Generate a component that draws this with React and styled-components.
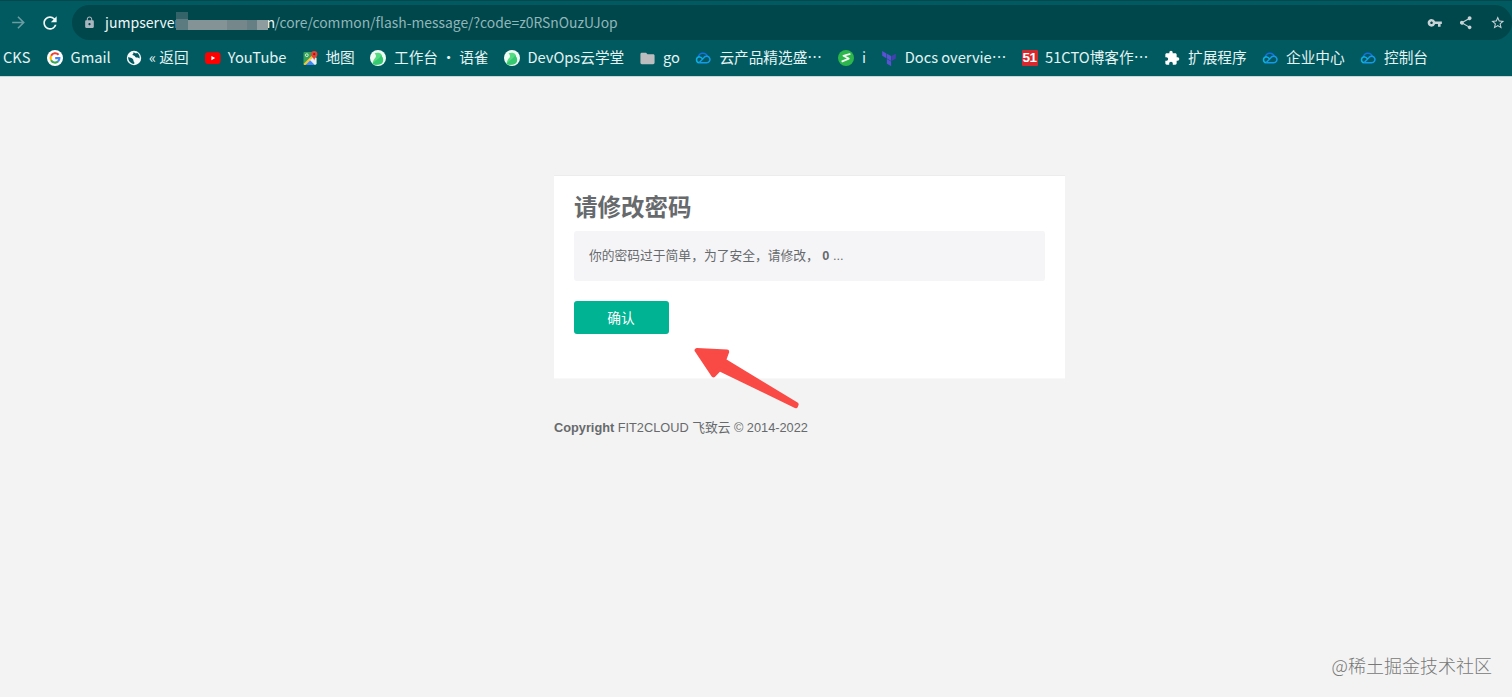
import styled, { createGlobalStyle } from 'styled-components';
import { MdArrowForward, MdRefresh, MdLock, MdVpnKey, MdShare, MdStarBorder, MdExtension, MdFolder } from 'react-icons/md';

const GlobalStyle = createGlobalStyle`
* {
  box-sizing: border-box;
}
body {
  margin: 0;
  background: #f3f3f3;
  overflow: hidden;
}
`;

const Page = styled.div`
position: relative;
height: 697px;
background: #f3f3f3;
`;

const Browser = styled.header`
height: 77px;
background: #005a60;
border-top: 1px solid #00474e;
border-bottom: 1px solid #c4d8d9;
color: #e4f3f3;
font-family: "Noto Sans CJK SC", sans-serif;
font-size: 14.67px;
white-space: nowrap;
overflow: hidden;
`;

const Toolbar = styled.div`
display: flex;
align-items: center;
height: 43px;
padding-left: 9px;
`;

const NavIcon = styled.span`
display: flex;
width: ${(props) => props.$width}px;
font-size: 18px;
color: ${(props) => props.$color || '#f1fafa'};
`;

const AddressBar = styled.div`
display: flex;
align-items: center;
flex: 1;
height: 35px;
padding: 0 7px 0 11px;
border-radius: 18px;
background: #00474c;
`;

const Url = styled.div`
display: flex;
flex: 1;
height: 22px;
line-height: 20px;
font-size: 13.87px;
color: #91b6b9;
`;

const Host = styled.span`
width: ${(props) => props.$width}px;
font-size: 14.1px;
color: #edf7f7;
`;

const Mosaic = styled.svg`
width: 92px;
height: 18px;
margin: 0 -1px 0 0;
position: relative;
z-index: 1;
`;

const Actions = styled.div`
display: flex;
align-items: center;
gap: 16px;
font-size: 15.5px;
color: #c9d3d7;
`;

const Bookmarks = styled.nav`
display: flex;
height: 28px;
padding-left: 3px;
`;

const Bookmark = styled.div`
display: flex;
flex: none;
align-items: center;
gap: ${(props) => props.$gap || 8}px;
width: ${(props) => props.$width}px;
line-height: 22px;
svg {
  flex: none;
}
`;

const Label = styled.span`
display: flex;
padding-bottom: 2px;
`;

const Main = styled.main`
width: 511px;
margin: 98px 0 0 554px;
font-family: "Liberation Sans", "Noto Sans CJK SC", sans-serif;
font-size: 12.75px;
color: #676a6c;
`;

const Card = styled.section`
height: 204px;
padding: 17px 20px;
background: #fff;
border-top: 1px solid #ececec;
border-bottom: 1px solid #f8f8f8;
`;

const Title = styled.h2`
margin: 0;
height: 38px;
font-size: 23.5px;
line-height: 31px;
font-weight: 700;
`;

const Message = styled.div`
height: 50px;
padding: 0 15px;
border-radius: 3px;
background: #f5f5f8;
font-size: 12.78px;
line-height: 49px;
`;

const ConfirmButton = styled.button`
display: block;
width: 95px;
height: 33px;
margin-top: 20px;
padding: 0 1px 2px 0;
border: 0;
border-radius: 3px;
background: #00b393;
color: #fff;
font-family: inherit;
font-size: 13.7px;
`;

const Copyright = styled.footer`
margin-top: 39px;
line-height: 20px;
`;

const Arrow = styled.svg`
position: absolute;
left: 690px;
top: 343px;
`;

const Watermark = styled.div`
position: absolute;
right: 20px;
bottom: 19px;
font-family: "Noto Sans CJK SC", sans-serif;
font-size: 18px;
font-weight: 300;
line-height: 26px;
color: #777;
`;

function Globe() {
  return (
    <svg width="16" height="16" viewBox="0 0 16 16">
      <circle cx="8" cy="8" r="7.2" fill="#f6fbfb" />
      <path d="M7.2 2.2c.9 1.3-.6 1.7-.8 2.7.9.7 2.4.3 2.7 1.6.3 1.1 1.5 1.2 2.6 1 .8-.1 1.1.9 1.9 1.1.4-2.4-.7-4.7-2.6-5.8-.5.7-1.2.9-1.8.3z" fill="#005a60" />
      <path d="M2.2 7.1c1.7.6 3.7.7 4.8 2.1.8 1 .1 1.8.9 2.5.5.5.7 1.1.2 2.2-3.5 0-6.2-3.1-5.9-6.8z" fill="#005a60" />
    </svg>
  );
}

function Google() {
  return (
    <svg width="16" height="16" viewBox="0 0 16 16">
      <circle cx="8" cy="8" r="8" fill="#fff" />
      <g fill="none" strokeWidth="2.1">
        <path d="M11.6 4.8A4.5 4.5 0 0 0 4.1 5.8" stroke="#ea4335" />
        <path d="M4.1 5.8a4.6 4.6 0 0 0 0 4.4" stroke="#fbbc05" />
        <path d="M4.1 10.2a4.5 4.5 0 0 0 7 1.2" stroke="#34a853" />
        <path d="M11.1 11.4a4.4 4.4 0 0 0 1.3-3.3H8.2" stroke="#4285f4" />
      </g>
    </svg>
  );
}

function YouTube() {
  return (
    <svg width="16" height="16" viewBox="0 0 16 16">
      <rect y="2.2" width="15.5" height="11.8" rx="3" fill="#f00" />
      <path d="M6.4 5.9v4.4l3.8-2.2z" fill="#fff" />
    </svg>
  );
}

function Maps() {
  return (
    <svg width="16" height="16" viewBox="0 0 16 16">
      <rect x="0.5" y="2" width="13" height="13" rx="1" fill="#34a35a" />
      <path d="M1 14.5L10.5 5 13.5 8.5V14z" fill="#e9eff2" />
      <path d="M.5 14L9.5 5 11 6.5 2.5 15h-1z" fill="#fbc52d" />
      <path d="M2.5 15l5-5 5 5z" fill="#4285f4" />
      <path d="M7 9.5l5.5 5.5" stroke="#fff" />
      <circle cx="3.8" cy="5.2" r="1.4" fill="none" stroke="#d9f0df" />
      <path d="M11.2 1A3.2 3.2 0 0 0 8 4.2c0 2.6 2.7 3.1 3.2 6.3.5-3.2 3.2-3.7 3.2-6.3A3.2 3.2 0 0 0 11.2 1z" fill="#ea4335" />
      <circle cx="11.2" cy="4.2" r="1.1" fill="#8c1d18" />
    </svg>
  );
}

function Yuque() {
  return (
    <svg width="16" height="16" viewBox="0 0 16 16">
      <circle cx="8" cy="8" r="8" fill="#effcf4" />
      <path d="M4.6 3.3c2.5-1 6-.6 7 1.4.4.9 0 1.5.8 2.6 1.4 2.3.7 5.5-1.8 6.7-2.4 1.1-6.3.8-8.2 0C3 12.7 3 11.5 3.7 10c.7-1.5 2.4-2.3 2.3-3.9C6 4.8 5.2 4.2 4.6 3.3z" fill="#55dc83" />
      <path d="M2.4 14c2.8-3.8 6.5-4.4 9.1-8.9.2.8.1 1.4 1 2.3 1.4 2.3.6 5.5-1.9 6.7-2.4 1-6.3.7-8.2-.1z" fill="#35ca70" />
    </svg>
  );
}

function Cloud() {
  return (
    <svg width="16" height="16" viewBox="0 0 17 16" fill="none" strokeWidth="1.6">
      <path d="M3.7 7.1C4 4.5 6 3 8.4 3c2.3 0 4 1.3 4.6 3.2" stroke="#176fe3" />
      <path d="M4.3 13.1h8.1a3.5 3.5 0 1 0-2.5-6L4.3 13.1" stroke="#169ae8" />
      <path d="M8.4 9.1C7.2 7.8 6.1 6.6 4.4 6.6a3.3 3.3 0 0 0-.1 6.5" stroke="#0bb0e5" />
    </svg>
  );
}

function Sheet() {
  return (
    <svg width="16" height="16" viewBox="0 0 16 16">
      <circle cx="8" cy="8" r="8" fill="#2db64b" />
      <path d="M12.4 3.9L5.4 5.8l5.4 2.8-7.2 3" fill="none" stroke="#f5fff6" strokeWidth="1.7" strokeLinejoin="round" />
    </svg>
  );
}

function Terraform() {
  return (
    <svg width="16" height="16" viewBox="0 0 16 16" fill="#5b50d6">
      <path d="M1.2 1l4.2 2.4v4.8L1.2 5.8z" />
      <path d="M5.9 3.7l4.2 2.4v4.8L5.9 8.5z" />
      <path d="M14.8 3.7l-4.2 2.4v4.8l4.2-2.4z" fill="#4540b2" />
      <path d="M5.9 9.1l4.2 2.4v4.6l-4.2-2.4z" />
    </svg>
  );
}

const FiftyOne = styled.span`
display: flex;
align-items: center;
justify-content: center;
width: 16px;
height: 16px;
border-radius: 1px;
background: #d5292f;
color: #fff;
font-family: "Liberation Sans", sans-serif;
font-size: 13.5px;
font-weight: 700;
letter-spacing: -0.6px;
line-height: 16px;
`;

const bookmarks = [
  { label: 'CKS', width: 44 },
  { label: 'Gmail', width: 79, gap: 7.6, icon: <Google /> },
  { label: '« 返回', width: 79, gap: 7, icon: <Globe /> },
  { label: 'YouTube', width: 98, gap: 6.8, icon: <YouTube /> },
  { label: '地图', width: 67, gap: 6.4, icon: <Maps /> },
  { label: '工作台 · 语雀', width: 134, icon: <Yuque /> },
  { label: 'DevOps云学堂', width: 135, gap: 7.5, icon: <Yuque /> },
  { label: 'go', width: 56, icon: <MdFolder size={17} color="#bdbdbf" style={{ marginRight: -1 }} /> },
  { label: '云产品精选盛', more: true, width: 143, gap: 8.4, icon: <Cloud /> },
  { label: 'i', width: 43, icon: <Sheet /> },
  { label: 'Docs overvie', more: true, width: 140.5, gap: 7.7, icon: <Terraform /> },
  { label: '51CTO博客作', more: true, width: 142.5, gap: 7.6, icon: <FiftyOne>51</FiftyOne> },
  { label: '扩展程序', width: 98, icon: <MdExtension size={16} color="#fff" /> },
  { label: '企业中心', width: 98, gap: 8, icon: <Cloud /> },
  { label: '控制台', width: 80, gap: 8, icon: <Cloud /> },
];

export default function App() {
  return (
    <Page lang="zh-CN">
      <GlobalStyle />
      <Browser>
        <Toolbar>
          <NavIcon $width={31} $color="#6a9da1"><MdArrowForward size={19} /></NavIcon>
          <NavIcon $width={32}><MdRefresh size={20} /></NavIcon>
          <AddressBar>
            <NavIcon $width={22} $color="#aab6bf"><MdLock size={13} /></NavIcon>
            <Url>
              <Host $width={70.5}>jumpserver</Host>
              <Mosaic viewBox="0 0 92 18">
                <rect width="12" height="18" fill="#35636a" />
                <rect y="7" width="12" height="11" fill="#5c7b80" />
                <rect x="12" y="8" width="39" height="10" fill="#849496" />
                <rect x="51" y="8" width="20" height="10" fill="#75878b" />
                <rect x="71" y="8" width="10" height="10" fill="#667f84" />
                <rect x="81" y="8" width="11" height="10" fill="#8e9c9f" />
              </Mosaic>
              <Host $width={8}>n</Host>
              <span>/core/common/flash-message/?code=z0RSnOuzUJop</span>
            </Url>
            <Actions>
              <MdVpnKey />
              <MdShare />
              <MdStarBorder />
            </Actions>
          </AddressBar>
        </Toolbar>
        <Bookmarks>
          {bookmarks.map((item, i) => (
            <Bookmark key={i} $width={item.width} $gap={item.gap}>
              {item.icon}
              <Label>
                {item.label}
                {item.more && <span>⋯</span>}
              </Label>
            </Bookmark>
          ))}
        </Bookmarks>
      </Browser>
      <Main>
        <Card>
          <Title>请修改密码</Title>
          <Message>你的密码过于简单，为了安全，请修改， <b>0</b> ...</Message>
          <ConfirmButton>确认</ConfirmButton>
        </Card>
        <Copyright><b>Copyright</b> FIT2CLOUD 飞致云 © 2014-2022</Copyright>
      </Main>
      <Arrow width="112" height="70" viewBox="0 0 112 70">
        <path d="M6.8 7.3L37 8.8l-3.2 8.7L106.4 61.4l-.6 1.6L29.5 25.9l-6 6.3z" fill="#f94a46" stroke="#f94a46" strokeWidth="4.4" strokeLinejoin="round" />
      </Arrow>
      <Watermark>@稀土掘金技术社区</Watermark>
    </Page>
  );
}
